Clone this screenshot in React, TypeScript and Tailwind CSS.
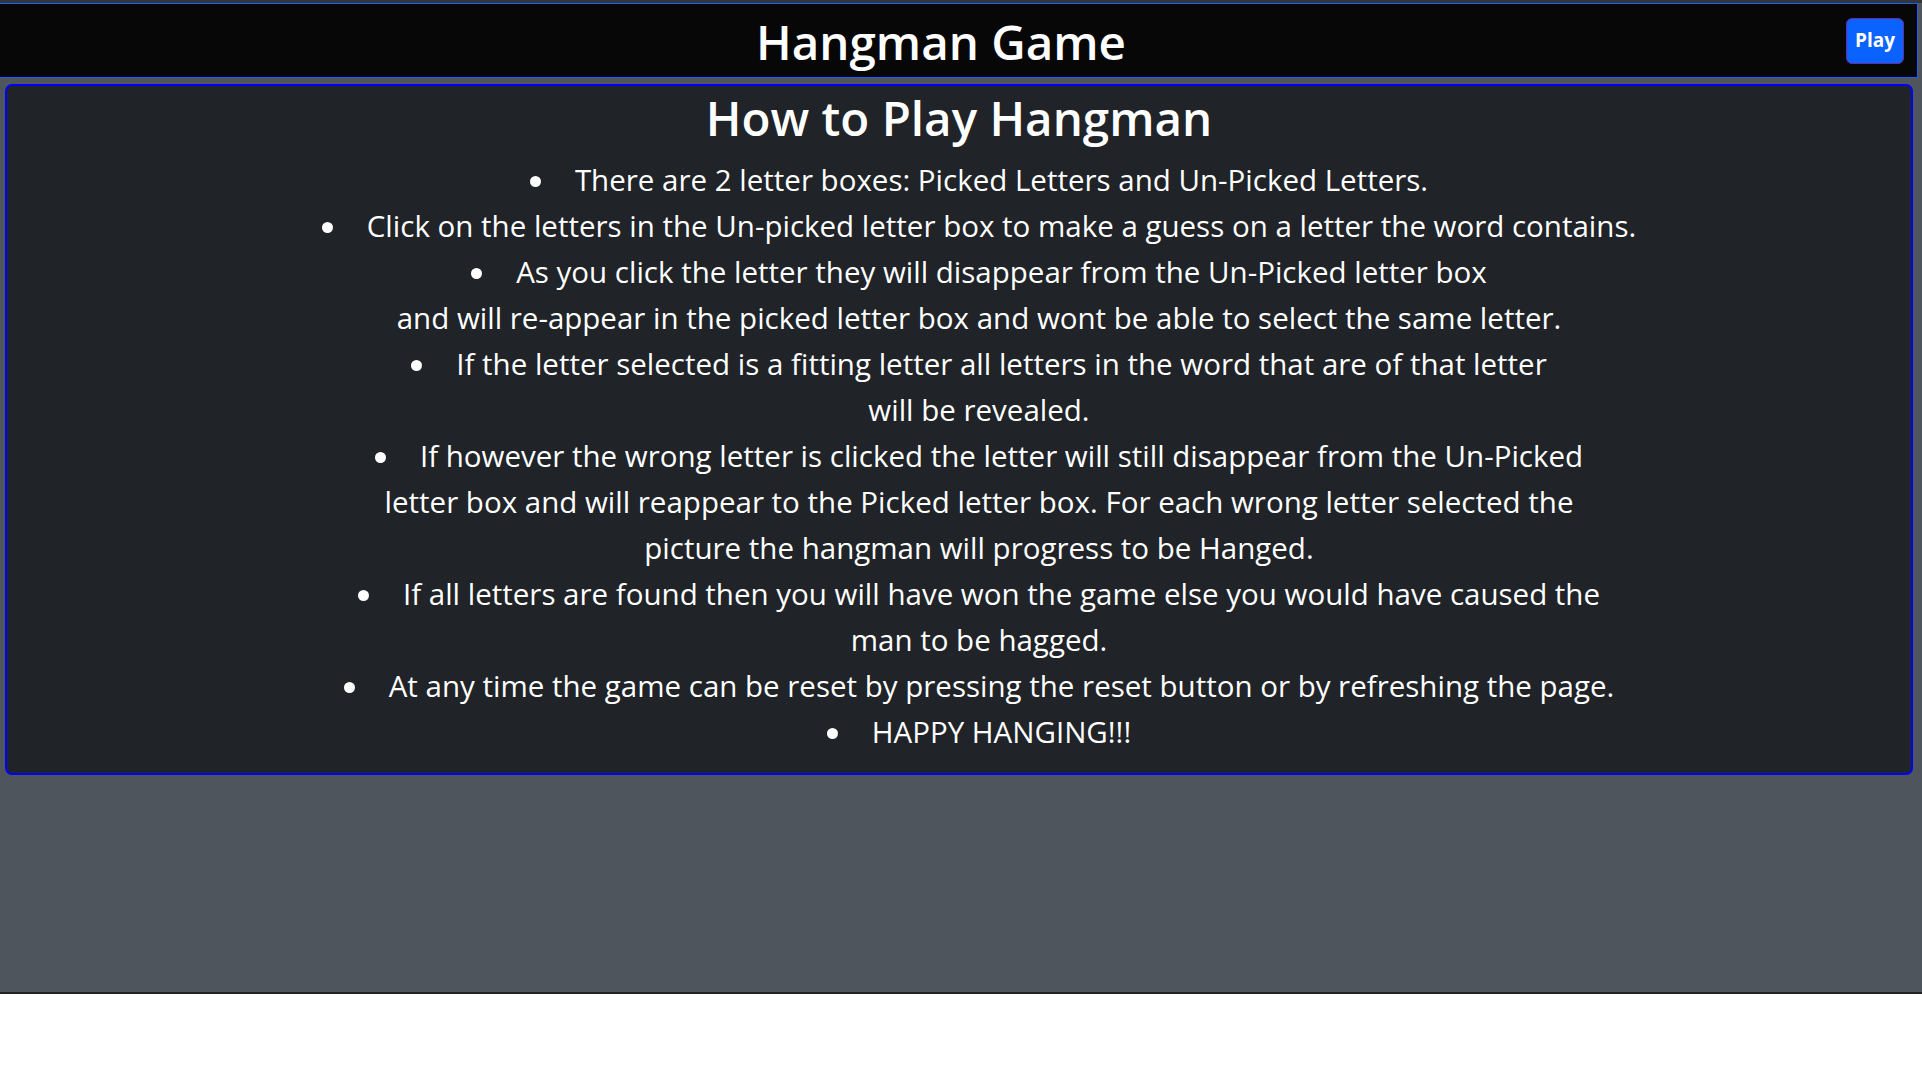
import React from "react";

const Dot = () => (
  <span className="inline-block w-[11px] h-[11px] rounded-full bg-white mr-[34px] align-[4px]" />
);

export default function App() {
  return (
    <div
      className="w-full h-[1082px] bg-white text-white"
      style={{ fontFamily: '"Open Sans", "Noto Sans", sans-serif' }}
    >
      <div className="box-border h-[994px] bg-[#4e555d] border-t-[3px] border-t-[#363636] border-b-2 border-b-[#222222]">
        <div className="w-[1918px]">
          <header className="flex items-center h-[75px] bg-[#070707] border-y border-r border-[#1a5fff] pl-[36px] pr-[13px]">
            <h1 className="flex-1 text-center text-[47.5px] font-semibold leading-[61px] pt-[2px]">
              Hangman Game
            </h1>
            <button className="w-[58px] h-[46px] rounded-[6px] bg-[#0a62ff] border border-[#6a2a9e] text-white text-[19px] font-bold leading-none">
              Play
            </button>
          </header>
          <main className="mx-[5px] mt-[6px] pt-[1px] bg-[#202327] border-2 border-[#0000ff] rounded-[7px]">
            <h2 className="text-center text-[47.5px] font-semibold leading-[61px] mb-[9px]">
              How to Play Hangman
            </h2>
            <ul className="pl-[40px] mb-[18px] text-center text-[29.5px] leading-[46px] whitespace-nowrap">
              <li>
                <Dot />There are 2 letter boxes: Picked Letters and Un-Picked Letters.
              </li>
              <li>
                <Dot />Click on the letters in the Un-picked letter box to make a guess on a letter the word contains.
              </li>
              <li>
                <Dot />As you click the letter they will disappear from the Un-Picked letter box
                <br />
                and will re-appear in the picked letter box and wont be able to select the same letter.
              </li>
              <li>
                <Dot />If the letter selected is a fitting letter all letters in the word that are of that letter
                <br />
                will be revealed.
              </li>
              <li>
                <Dot />If however the wrong letter is clicked the letter will still disappear from the Un-Picked
                <br />
                letter box and will reappear to the Picked letter box. For each wrong letter selected the
                <br />
                picture the hangman will progress to be Hanged.
              </li>
              <li>
                <Dot />If all letters are found then you will have won the game else you would have caused the
                <br />
                man to be hagged.
              </li>
              <li>
                <Dot />At any time the game can be reset by pressing the reset button or by refreshing the page.
              </li>
              <li>
                <Dot />HAPPY HANGING!!!
              </li>
            </ul>
          </main>
        </div>
      </div>
    </div>
  );
}
